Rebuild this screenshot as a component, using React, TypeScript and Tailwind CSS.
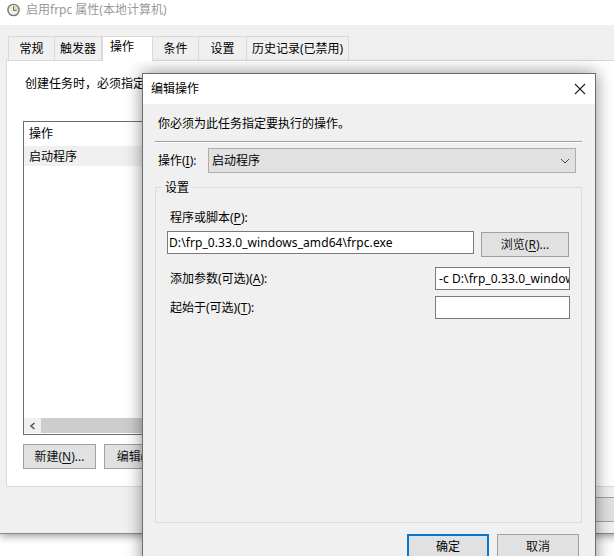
const font = "font-['Noto_Sans','Noto_Sans_CJK_SC',sans-serif]"

function Key({ c }: { c: string }) {
  return <span className="underline underline-offset-2">{c}</span>
}

function Btn({ children, className }: { children?: React.ReactNode; className: string }) {
  return (
    <div className={`flex items-center justify-center border border-[#a0a0a0] bg-[#e1e1e1] text-[12px] text-[#111] ${className}`}>
      {children}
    </div>
  )
}

const tabs = ["常规", "触发器", "操作", "条件", "设置", "历史记录(已禁用)"]
const tabWidths = ["w-[47px]", "w-[47px]", "w-[51px]", "w-[46px]", "w-[48px]", "w-[102px]"]

function BackWindow() {
  return (
    <div className="absolute left-0 top-0 h-[534px] w-[700px] border-b border-[#8a8a8a] bg-[#f0f0f0] shadow-[0_2px_8px_rgba(0,0,0,0.4)]">
      <div className="flex h-[25px] items-center gap-[6px] bg-white pb-[5px] pl-[7px] text-[12px] text-[#9a9a9a]">
        <svg width="13" height="14" viewBox="0 0 14 14">
          <circle cx="7" cy="7" r="6" fill="#eeeeea" stroke="#77766f" strokeWidth="1.5" />
          <path d="M7 7V2A5 5 0 0 1 12 7Z" fill="#edd9a3" />
          <path d="M7 3V7.5H10.5" fill="none" stroke="#66655f" strokeWidth="1" />
        </svg>
        <span>启用frpc 属性(本地计算机)</span>
      </div>
      <div className="flex h-[35px] items-end pl-[8px]">
        {tabs.map((t, i) =>
          i === 2 ? (
            <div key={t} className={`relative z-10 -mb-px flex h-[25px] items-start border border-b-0 border-[#d9d9d9] bg-white pl-[7px] pt-[1px] text-[12px] text-black ${tabWidths[i]}`}>
              {t}
            </div>
          ) : (
            <div key={t} className={`flex h-[24px] items-center justify-center border border-b-0 border-l-0 border-[#d9d9d9] bg-[#f0f0f0] text-[12px] text-black first:border-l ${tabWidths[i]}`}>
              {t}
            </div>
          )
        )}
      </div>
      <div className="ml-[6px] h-[427px] w-[690px] border border-[#d9d9d9] bg-white pl-[16px] pt-[13px] text-[12px] text-black">
        <div className="h-[19px] pl-[2px] leading-[19px]">创建任务时，必须指定任务启动时发生的操作。</div>
        <div className="mt-[28px] h-[314px] w-[520px] border border-[#6d6d6d]">
          <div className="h-[24px] pl-[5px] pt-[2px] leading-[20px]">操作</div>
          <div className="h-[20px] bg-[#f0f0f0] pl-[5px] leading-[21px]">启动程序</div>
          <div className="h-[252px]" />
          <div className="flex h-[15px] items-center bg-[#f0f0f0]">
            <div className="flex w-[17px] justify-center">
              <svg width="8" height="8" viewBox="0 0 8 8">
                <path d="M5.5 1L2 4L5.5 7" fill="none" stroke="#555" strokeWidth="1.6" />
              </svg>
            </div>
            <div className="h-full flex-1 bg-[#cdcdcd]" />
          </div>
        </div>
        <div className="mt-[9px] flex gap-[8px]">
          <Btn className="h-[25px] w-[73px]">新建(<Key c="N" />)...</Btn>
          <Btn className="h-[25px] w-[73px]">编辑(<Key c="E" />)...</Btn>
        </div>
      </div>
      {/* only the right end of this button shows past the dialog */}
      <div className="ml-[500px] mt-[10px]">
        <Btn className="h-[25px] w-[150px]" />
      </div>
    </div>
  )
}

function Dialog() {
  return (
    <div className="absolute left-[142px] top-[73px] h-[520px] w-[454px] border border-[#6e6e6e] bg-[#f0f0f0] shadow-[0_0_16px_rgba(0,0,0,0.45)]">
      <div className="flex h-[30px] items-center justify-between bg-white pl-[8px] pr-[9px] text-[12px] text-black">
        <span>编辑操作</span>
        <svg width="12" height="12" viewBox="0 0 12 12">
          <path d="M1 1L11 11M11 1L1 11" stroke="#222" strokeWidth="1.1" />
        </svg>
      </div>
      <div className="px-[12px] text-[12px] text-black">
        <div className="h-[37px] pl-[3px] pt-[10px] leading-[19px]">你必须为此任务指定要执行的操作。</div>
        <div className="mr-[1px] h-[2px] border-b border-t border-b-white border-t-[#a0a0a0]" />
        <div className="mt-[5px] flex items-center">
          <span className="w-[53px] pl-[3px]">操作(<Key c="I" />):</span>
          <div className="flex h-[25px] w-[368px] items-center justify-between border border-[#adadad] bg-[#e1e1e1] pl-[3px] pr-[5px]">
            <span>启动程序</span>
            <svg width="10" height="6" viewBox="0 0 10 6">
              <path d="M1 1L5 5L9 1" fill="none" stroke="#444" strokeWidth="1" />
            </svg>
          </div>
        </div>
        <div className="relative mt-[14px] h-[336px] w-[427px] border border-[#dcdcdc] pl-[14px] pt-[20px]">
          <span className="absolute -top-[10px] left-[6px] bg-[#f0f0f0] px-[3px] leading-[19px]">设置</span>
          <div className="h-[19px] leading-[19px]">程序或脚本(<Key c="P" />):</div>
          <div className="ml-[-3px] mt-[4px] flex items-start gap-[7px]">
            <div className="flex h-[23px] w-[307px] items-center overflow-hidden whitespace-nowrap border border-[#7a7a7a] bg-white pl-[1px] tracking-[0.08px]">
              D:\frp_0.33.0_windows_amd64\frpc.exe
            </div>
            <Btn className="mt-[1px] h-[25px] w-[88px]">浏览(<Key c="R" />)...</Btn>
          </div>
          <div className="mt-[10px] flex h-[23px] items-center justify-between pr-[11px]">
            <span>添加参数(可选)(<Key c="A" />):</span>
            <div className="flex h-[23px] w-[135px] items-center overflow-hidden whitespace-nowrap border border-[#7a7a7a] bg-white pl-[3px] tracking-[0.08px]">
              -c D:\frp_0.33.0_windows_amd64\frpc.toml
            </div>
          </div>
          <div className="mt-[6px] flex h-[23px] items-center justify-between pr-[11px]">
            <span>起始于(可选)(<Key c="T" />):</span>
            <div className="h-[23px] w-[135px] border border-[#7a7a7a] bg-white" />
          </div>
        </div>
        <div className="ml-[252px] mt-[11px] flex gap-[8px]">
          <div className="flex h-[26px] w-[82px] items-center justify-center border-2 border-[#0078d7] bg-[#e1e1e1]">确定</div>
          <Btn className="h-[26px] w-[82px]">取消</Btn>
        </div>
      </div>
    </div>
  )
}

export default function App() {
  return (
    <div className={`relative h-[556px] w-[614px] overflow-hidden bg-white ${font}`}>
      <BackWindow />
      <Dialog />
    </div>
  )
}
